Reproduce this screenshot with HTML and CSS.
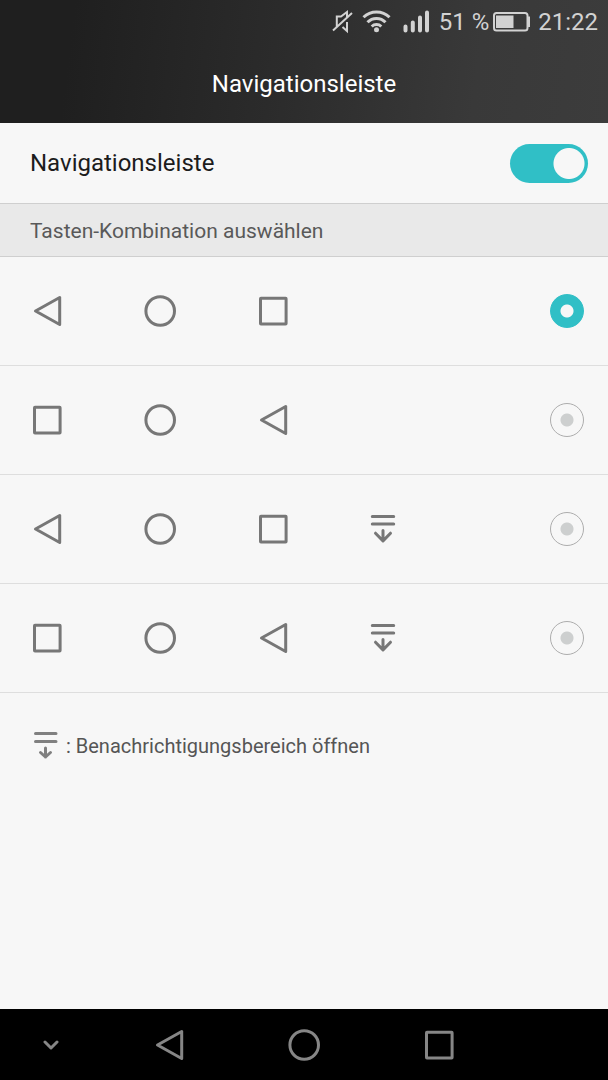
FILE: index.html
```html
<!DOCTYPE html>
<html lang="de">
<head>
<meta charset="utf-8">
<meta name="viewport" content="width=device-width, initial-scale=1">
<title>Navigationsleiste</title>
<link rel="stylesheet" href="styles.css">
</head>
<body class="screen">
<svg class="sprite" aria-hidden="true">
  <symbol id="back" viewBox="0 0 32 32"><path d="M28.700 2.500v27L4.500 16z"/></symbol>
  <symbol id="home" viewBox="0 0 32 32"><circle cx="16.200" cy="16" r="14.300"/></symbol>
  <symbol id="recent" viewBox="0 0 32 32"><rect x="3.500" y="3.300" width="25.600" height="25.600" rx="0.500"/></symbol>
  <symbol id="notify" viewBox="0 0 32 32"><path d="M2.300 3.500h21.400M2.300 10.900h21.400M13 17.500v10M5.500 20.200l7.500 7.700 7.500-7.700"/></symbol>
</svg>

<header class="top">
  <div class="status">
    <svg class="status-mute" viewBox="0 0 22 24" aria-label="Stumm"><path d="M5.800 16.500V6.500h4.200l6-4.500v5M16 12v9l-4.500-4M2 20.500L21 3"/></svg>
    <svg class="status-wifi" viewBox="0 0 30 24" aria-label="WLAN"><path d="M2.500 7.300a18.500 18.500 0 0 1 26 0M6.500 12.300a12.500 12.500 0 0 1 18 0M10.700 16.500a7 7 0 0 1 9.600 0"/><circle cx="15.500" cy="19.700" r="2.500"/></svg>
    <svg class="status-signal" viewBox="0 0 26 24" aria-label="Mobilfunk"><path d="M2.500 16.500v4M9.800 12.500v8M17 7.500v13M24 2.500v18"/></svg>
    <span class="status-percent">51 %</span>
    <svg class="status-battery" viewBox="0 0 38 24" aria-label="Akku"><rect class="shell" x="2" y="3" width="33.500" height="17.500" rx="2.500"/><path class="tip" d="M36 7.500h1v8.500h-1"/><path class="level" d="M4 5.500h17.500v12.500h-17.500z"/></svg>
    <time class="status-time">21:22</time>
  </div>
  <h1 class="title">Navigationsleiste</h1>
</header>

<main class="content">
  <label class="switch-row">
    <span>Navigationsleiste</span>
    <input class="switch" type="checkbox" role="switch" checked>
  </label>

  <h2 class="section" id="combo">Tasten-Kombination auswählen</h2>
  <div role="radiogroup" aria-labelledby="combo">
    <label class="option">
      <svg class="icon"><use href="#back"/></svg>
      <svg class="icon"><use href="#home"/></svg>
      <svg class="icon"><use href="#recent"/></svg>
      <input class="radio" type="radio" name="combo" aria-label="Zurück, Start, Letzte" checked>
    </label>
    <label class="option">
      <svg class="icon"><use href="#recent"/></svg>
      <svg class="icon"><use href="#home"/></svg>
      <svg class="icon"><use href="#back"/></svg>
      <input class="radio" type="radio" name="combo" aria-label="Letzte, Start, Zurück">
    </label>
    <label class="option">
      <svg class="icon"><use href="#back"/></svg>
      <svg class="icon"><use href="#home"/></svg>
      <svg class="icon"><use href="#recent"/></svg>
      <svg class="icon"><use href="#notify"/></svg>
      <input class="radio" type="radio" name="combo" aria-label="Zurück, Start, Letzte, Benachrichtigungen">
    </label>
    <label class="option">
      <svg class="icon"><use href="#recent"/></svg>
      <svg class="icon"><use href="#home"/></svg>
      <svg class="icon"><use href="#back"/></svg>
      <svg class="icon"><use href="#notify"/></svg>
      <input class="radio" type="radio" name="combo" aria-label="Letzte, Start, Zurück, Benachrichtigungen">
    </label>
  </div>

  <p class="hint">
    <svg class="hint-icon" viewBox="0 0 24 30" aria-hidden="true"><path d="M1.500 2.500h20.500M1.500 10.500h20.500M11.500 17v9M6.500 21.500l5 4.500 5-4.500"/></svg>
    <span>: Benachrichtigungsbereich öffnen</span>
  </p>
</main>

<nav class="navbar">
  <button class="nav-button" aria-label="Ausblenden"><svg class="nav-hide" viewBox="0 0 16 10"><path d="M2 2l6 6 6-6"/></svg></button>
  <button class="nav-button" aria-label="Zurück"><svg class="icon"><use href="#back"/></svg></button>
  <button class="nav-button" aria-label="Start"><svg class="icon"><use href="#home"/></svg></button>
  <button class="nav-button" aria-label="Letzte Apps"><svg class="icon"><use href="#recent"/></svg></button>
</nav>
</body>
</html>
```
FILE: styles.css
```css
* {
  box-sizing: border-box;
}

.screen {
  display: flex;
  flex-direction: column;
  min-height: 100vh;
  margin: 0;
  background: #f7f7f7;
  color: #1c1c1c;
  font-family: Roboto, "Noto Sans", sans-serif;
  font-size: 24px;
  line-height: 32px;
}

.sprite {
  display: none;
}

.top {
  height: 123px;
  background: linear-gradient(97deg, #1f1f1f 12%, #2b2b2b 45%, #393939 78%, #3c3c3c);
  color: #fff;
}

.status {
  display: flex;
  align-items: center;
  justify-content: flex-end;
  height: 44px;
  padding-right: 10px;
  color: #d2d2d2;
}

.status svg {
  height: 24px;
  fill: none;
  stroke: currentColor;
  stroke-width: 2;
}

.status-mute {
  width: 22px;
  margin-right: 8px;
}

.status-wifi {
  width: 30px;
  margin-right: 12px;
}

.status .status-wifi {
  stroke-width: 3;
}

.status-wifi circle {
  fill: currentColor;
  stroke: none;
}

.status-signal {
  width: 26px;
  margin-right: 10px;
}

.status .status-signal {
  stroke-width: 4;
  stroke-linecap: round;
}

.status-percent {
  margin-right: 3px;
}

.status-battery {
  width: 38px;
  margin-right: 8px;
}

.status-battery .level {
  fill: currentColor;
  stroke: none;
}

.title {
  margin: 0;
  padding-top: 24px;
  font-size: 24px;
  font-weight: 400;
  line-height: 32px;
  text-align: center;
}

.content {
  flex: 1;
}

.switch-row {
  display: flex;
  align-items: center;
  justify-content: space-between;
  height: 80px;
  padding: 0 20px 0 30px;
}

.switch {
  width: 78px;
  height: 39px;
  margin: 0;
  appearance: none;
  border-radius: 20px;
  background: radial-gradient(circle at 59px 50%, #f7f7f7 15px, #30bfc6 16px);
}

.switch:not(:checked) {
  background: radial-gradient(circle at 19px 50%, #f7f7f7 15px, #c4c4c4 16px);
}

.section {
  height: 54px;
  margin: 0;
  padding: 11px 30px 9px;
  border-top: 1px solid #cfcfcf;
  border-bottom: 1px solid #cfcfcf;
  background: #e9e9e9;
  color: #595959;
  font-size: 21px;
  font-weight: 400;
}

.option {
  display: flex;
  align-items: center;
  gap: 81px;
  height: 109px;
  padding: 0 24px 0 31px;
  border-bottom: 1px solid #dedede;
}

.icon {
  width: 32px;
  height: 32px;
  fill: none;
  stroke: #777;
  stroke-width: 3;
  stroke-linecap: round;
  stroke-linejoin: round;
}

.radio {
  width: 34px;
  height: 34px;
  margin: 0 0 0 auto;
  appearance: none;
  border: 1px solid #adadad;
  border-radius: 50%;
  background: radial-gradient(circle, #cdcfcf 6px, #f7f7f7 7px);
}

.radio:checked {
  border-color: #30bfc6;
  background: radial-gradient(circle, #f7f7f7 6px, #30bfc6 7px);
}

.hint {
  display: flex;
  align-items: center;
  gap: 8px;
  margin: 0;
  padding: 37px 34px;
  color: #555;
  font-size: 20px;
}

.hint-icon {
  width: 24px;
  height: 30px;
  fill: none;
  stroke: #808080;
  stroke-width: 3;
  stroke-linecap: round;
  stroke-linejoin: round;
}

.navbar {
  display: grid;
  grid-template-columns: 1fr repeat(3, 135px) 1fr;
  height: 71px;
  background: #000;
}

.nav-button {
  display: flex;
  align-items: center;
  justify-content: center;
  padding: 0;
  border: 0;
  background: none;
}

.nav-button .icon {
  stroke: #868686;
}

.nav-hide {
  width: 16px;
  height: 10px;
  fill: none;
  stroke: #868686;
  stroke-width: 3;
  stroke-linecap: round;
  stroke-linejoin: round;
}
```
